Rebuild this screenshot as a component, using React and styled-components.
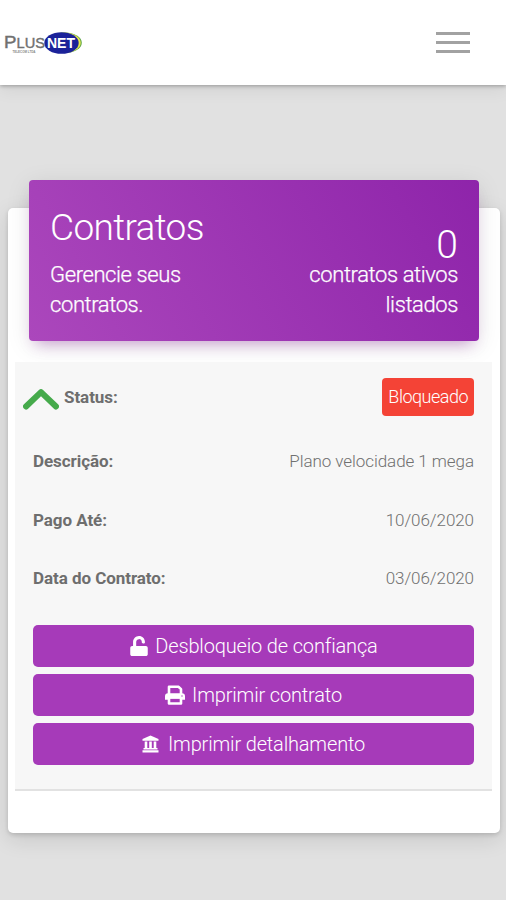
import React, { useState } from 'react';
import styled, { createGlobalStyle } from 'styled-components';
import { FaUnlock } from 'react-icons/fa';

const PrintIcon = () => (
    <svg width="20" height="20" viewBox="0 0 20 20" fill="none" stroke="#fff">
        <path d="M4 9V1.8h9.6L16 4.2V9" strokeWidth="2.6" strokeLinejoin="round" />
        <path d="M3 8.2h14a3 3 0 0 1 3 3v3.6h-3.5v-1.3h-13v1.3H0v-3.6a3 3 0 0 1 3-3z" fill="#fff" stroke="none" />
        <path d="M4 12.5h12v6H4z" strokeWidth="2.6" strokeLinejoin="round" />
        <circle cx="17" cy="11" r="0.7" fill="#a63ab9" stroke="none" />
    </svg>
);

const BankIcon = () => (
    <svg width="17" height="18" viewBox="0 0 17 18" fill="#fff">
        <path d="M8.5 0.5 16.5 4v1.7H.5V4z" />
        <path d="M2.7 6.5h2.6v6.8H2.7zM7.2 6.5h2.6v6.8H7.2zM11.7 6.5h2.6v6.8h-2.6z" />
        <path d="M1.5 13h14v1.6h-14zM.5 15.3h16v2.2H.5z" />
    </svg>
);

const UnlockIcon = () => <FaUnlock size={20} />;

const contract = [
    { label: 'Descrição:', value: 'Plano velocidade 1 mega', height: 60 },
    { label: 'Pago Até:', value: '10/06/2020', height: 58 },
    { label: 'Data do Contrato:', value: '03/06/2020', height: 58 },
];

const actions = [
    { label: 'Desbloqueio de confiança', icon: UnlockIcon, gap: 6 },
    { label: 'Imprimir contrato', icon: PrintIcon, gap: 7 },
    { label: 'Imprimir detalhamento', icon: BankIcon, gap: 9 },
];

const Logo = () => (
    <svg width="80" height="26" viewBox="0 0 80 26" fontFamily="'Liberation Sans', sans-serif">
        <ellipse cx="60.8" cy="12.8" rx="17" ry="10.2" fill="#5fa548" />
        <ellipse cx="59.7" cy="12.8" rx="17" ry="10.2" fill="#e9ea4e" />
        <ellipse cx="57.5" cy="13" rx="17.2" ry="10.8" fill="#1b2299" />
        <text x="0" y="18" fontSize="17" fill="#707070" stroke="#707070" strokeWidth="0.4" textLength="12.5" lengthAdjust="spacingAndGlyphs">P</text>
        <text x="12.5" y="18" fontSize="15" fill="#707070" stroke="#707070" strokeWidth="0.4" textLength="28.5" lengthAdjust="spacingAndGlyphs">LUS</text>
        <text x="43" y="18.2" fontSize="14.5" fontWeight="bold" fill="#fff" textLength="28" lengthAdjust="spacingAndGlyphs">NET</text>
        <text x="8.5" y="22.6" fontSize="3" fontWeight="bold" fill="#888" textLength="23" lengthAdjust="spacingAndGlyphs">TELECOM LTDA</text>
    </svg>
);

const App = () => {
    const [open, setOpen] = useState(true);

    return (<Page>
        <GlobalStyle />
        <Navbar>
            <Logo />
            <MenuButton aria-label="Menu">
                <MenuLine />
                <MenuLine />
                <MenuLine />
            </MenuButton>
        </Navbar>
        <Card>
            <CardHeader>
                <div>
                    <Title>Contratos</Title>
                    <Subtitle>Gerencie seus contratos.</Subtitle>
                </div>
                <Counter>
                    <Count>0</Count>
                    <Subtitle>contratos ativos listados</Subtitle>
                </Counter>
            </CardHeader>
            <Panel>
                <StatusRow>
                    <Toggle aria-label="Status" onClick={() => setOpen(!open)}>
                        <svg width="36" height="24" viewBox="0 0 36 24">
                            <path d="M3 19.5 18 5.2 33 19.5" fill="none" stroke="#45aa4b" strokeWidth="6" strokeLinecap="round" strokeLinejoin="round" />
                        </svg>
                    </Toggle>
                    <Label>Status:</Label>
                    <Badge>Bloqueado</Badge>
                </StatusRow>
                {
                    open && contract.map(item => {
                        return <Row key={item.label} $height={item.height}>
                            <Label>{item.label}</Label>
                            <Value>{item.value}</Value>
                        </Row>
                    })
                }
                <Actions>
                    {
                        actions.map(({ label, icon: Icon, gap }) => {
                            return <ActionButton key={label} $gap={gap}>
                                <Icon />
                                <span>{label}</span>
                            </ActionButton>
                        })
                    }
                </Actions>
            </Panel>
        </Card>
    </Page>);
}

export default App;


const GlobalStyle = createGlobalStyle`
    * {
        box-sizing: border-box;
    }
    body {
        margin: 0;
        background: #e1e1e1;
        font-family: Roboto, sans-serif;
        font-weight: 300;
    }
    button {
        border: 0;
        padding: 0;
        background: none;
        font: inherit;
    }
    svg {
        display: block;
        flex-shrink: 0;
    }
`

const Page = styled.div`
    height: 900px;
    overflow: hidden;
`

const Navbar = styled.header`
    display: flex;
    align-items: center;
    justify-content: space-between;
    height: 85px;
    padding: 0 36px 0 4px;
    background: #fff;
    box-shadow: 0 1px 4px rgba(0, 0, 0, 0.3), 0 6px 16px rgba(0, 0, 0, 0.06);
`

const MenuButton = styled.button`
    display: flex;
    flex-direction: column;
    gap: 6px;
`

const MenuLine = styled.span`
    width: 34px;
    height: 3px;
    background: #a2a2a2;
`

const Card = styled.main`
    display: flex;
    flex-direction: column;
    height: 625px;
    margin: 123px 6px 0 8px;
    padding: 0 8px 0 7px;
    border-radius: 5px;
    background: #fff;
    box-shadow: 0 2px 4px rgba(0, 0, 0, 0.14), 0 6px 22px rgba(0, 0, 0, 0.12);
`

const CardHeader = styled.div`
    display: flex;
    justify-content: space-between;
    height: 161px;
    margin: -28px 13px 0 14px;
    padding: 26px 21px 0 21px;
    border-radius: 4px;
    color: #fff;
    background: linear-gradient(60deg, #ab47bc, #8e24aa);
    box-shadow: 0 5px 24px rgba(0, 0, 0, 0.1), 0 9px 14px -7px rgba(156, 39, 176, 0.4);
`

const Title = styled.h1`
    margin: 0 0 10px;
    font-size: 37px;
    font-weight: 300;
    line-height: 44px;
    letter-spacing: -0.65px;
`

const Subtitle = styled.p`
    width: 160px;
    margin: 0;
    font-size: 22px;
    line-height: 30px;
    letter-spacing: -0.4px;
    -webkit-text-stroke: 0.25px currentColor;
`

const Counter = styled.div`
    display: flex;
    flex-direction: column;
    padding-top: 24px;
    text-align: right;
`

const Count = styled.span`
    font-size: 39px;
    line-height: 30px;
`

const Panel = styled.section`
    height: 429px;
    margin-top: 21px;
    padding: 0 18px;
    border-bottom: 2px solid #e2e2e2;
    background: #f7f7f7;
`

const StatusRow = styled.div`
    display: flex;
    align-items: center;
    height: 70px;
    margin-left: -10px;
`

const Toggle = styled.button`
    margin: 3px 5px 0 0;
`

const Row = styled.div`
    display: flex;
    align-items: center;
    justify-content: space-between;
    height: ${props => props.$height}px;
    padding-bottom: 2px;
`

const Label = styled.span`
    color: #6e6e6e;
    font-size: 17px;
    font-weight: 700;
    letter-spacing: -0.06px;
`

const Value = styled.span`
    color: #707070;
    font-size: 17px;
    letter-spacing: -0.06px;
`

const Badge = styled.span`
    margin-left: auto;
    padding: 0 6px;
    border-radius: 4px;
    color: #fff;
    background: #f44336;
    font-size: 18px;
    line-height: 38px;
    letter-spacing: -0.5px;
`

const Actions = styled.div`
    display: flex;
    flex-direction: column;
    gap: 7px;
    padding-top: 17px;
`

const ActionButton = styled.button`
    display: flex;
    align-items: center;
    justify-content: center;
    gap: ${props => props.$gap}px;
    height: 42px;
    border-radius: 5px;
    color: #fff;
    background: #a63ab9;
    font-size: 20px;
    letter-spacing: -0.16px;
`
